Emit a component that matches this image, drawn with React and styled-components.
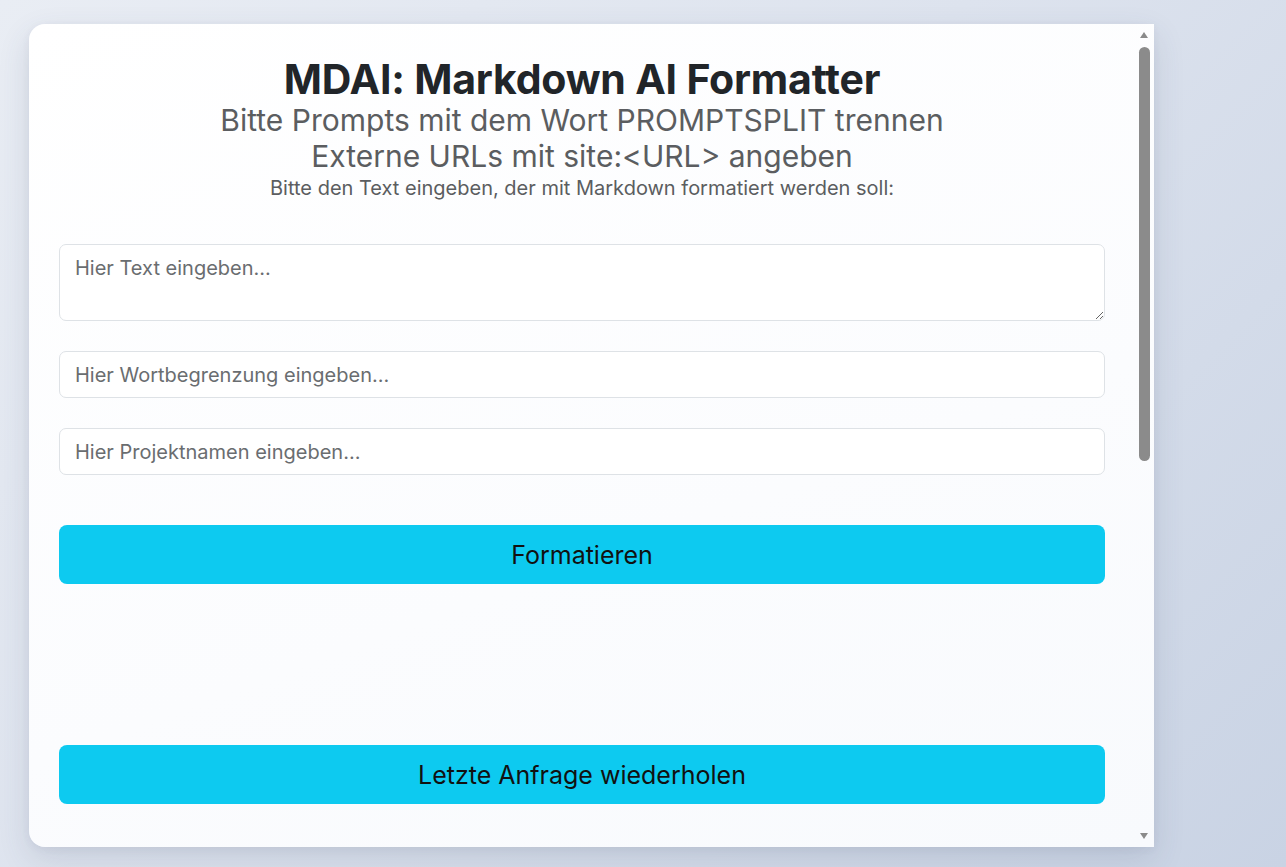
import React, { useEffect, useRef, useState } from "react";
import styled, { createGlobalStyle } from "styled-components";

const GlobalStyle = createGlobalStyle`
  html, body {
    margin: 0;
    padding: 0;
    height: 100%;
  }
  body {
    font-family: Inter, "Noto Sans", sans-serif;
    background: linear-gradient(135deg, #e9edf4 0%, #dde3ee 45%, #c9d3e4 100%);
    overflow: hidden;
  }
`;

const Page = styled.div`
  height: 867px;
  padding: 24px 0 0 29px;
  box-sizing: border-box;
`;

const Card = styled.main`
  width: 1125px;
  height: 823px;
  display: flex;
  overflow: hidden;
  background: linear-gradient(160deg, #ffffff 0%, #fbfcfe 60%, #f8fafd 100%);
  border-radius: 16px 0 0 16px;
  box-shadow: 0 12px 32px rgba(60, 72, 100, 0.14), 0 2px 8px rgba(60, 72, 100, 0.06);
`;

const Scroller = styled.div`
  flex: 1;
  min-width: 0;
  overflow-y: auto;
  box-sizing: border-box;
  padding: 32px 34px 0 30px;
  scrollbar-width: none;
  &::-webkit-scrollbar {
    display: none;
  }
`;

const ScrollBar = styled.div`
  width: 15px;
  flex: none;
  display: flex;
  flex-direction: column;
`;

const ArrowBox = styled.div`
  height: 22px;
  display: flex;
  align-items: center;
  justify-content: flex-start;
  padding-left: 1px;
`;

const Arrow = styled.span`
  width: 0;
  height: 0;
  border-left: 4.5px solid transparent;
  border-right: 4.5px solid transparent;
  ${(p) =>
    p.down
      ? "border-top: 6px solid #8a8a8a;"
      : "border-bottom: 6px solid #8a8a8a;"}
`;

const Track = styled.div`
  flex: 1;
  position: relative;
`;

const Thumb = styled.div`
  position: absolute;
  left: 0;
  width: 11px;
  border-radius: 6px;
  background: #8b8b8b;
`;

const Header = styled.header`
  display: flex;
  flex-direction: column;
  align-items: center;
  text-align: center;
  margin-bottom: 42px;
`;

const Title = styled.h1`
  margin: 0;
  font-size: 41px;
  font-weight: 700;
  line-height: 46px;
  color: #212529;
  letter-spacing: -0.2px;
`;

const Hint = styled.p`
  margin: 0;
  font-size: ${(p) => (p.small ? "20px" : "30px")};
  line-height: ${(p) => (p.small ? "28px" : "36px")};
  color: #5b5d60;
  font-weight: 400;
`;

const Form = styled.form`
  display: flex;
  flex-direction: column;
`;

const fieldBase = `
  width: 100%;
  box-sizing: border-box;
  border: 1px solid #dee2e6;
  border-radius: 7px;
  background: #fff;
  font-family: Inter, "Noto Sans", sans-serif;
  font-size: 20px;
  color: #212529;
  padding: 0 15px;
  outline: none;
  &::placeholder {
    color: #6a6d70;
  }
`;

const TextArea = styled.textarea`
  ${fieldBase}
  height: 77px;
  padding-top: 10px;
  line-height: 26px;
  margin-bottom: 30px;
`;

const Input = styled.input`
  ${fieldBase}
  height: 47px;
  margin-bottom: 30px;
`;

const Button = styled.button`
  width: 100%;
  height: 59px;
  border: none;
  border-radius: 8px;
  background: #0dcaf0;
  color: #111;
  font-family: Inter, "Noto Sans", sans-serif;
  font-size: 25px;
  font-weight: 400;
  cursor: pointer;
`;

const Output = styled.section`
  min-height: ${(p) => p.h}px;
`;

export default function App() {
  const scrollRef = useRef(null);
  const trackRef = useRef(null);
  const [thumb, setThumb] = useState({ top: 1, height: 415 });

  const update = () => {
    const el = scrollRef.current;
    const track = trackRef.current;
    if (!el || !track) return;
    const th = track.clientHeight;
    const height = Math.max(30, (el.clientHeight / el.scrollHeight) * th);
    const max = el.scrollHeight - el.clientHeight;
    const top = 1 + (max > 0 ? (el.scrollTop / max) * (th - height - 2) : 0);
    setThumb({ top, height });
  };

  useEffect(update, []);

  return (
    <>
      <GlobalStyle />
      <Page>
        <Card>
          <Scroller ref={scrollRef} onScroll={update}>
            <Header>
              <Title>MDAI: Markdown AI Formatter</Title>
              <Hint>Bitte Prompts mit dem Wort PROMPTSPLIT trennen</Hint>
              <Hint>Externe URLs mit site:&lt;URL&gt; angeben</Hint>
              <Hint small>Bitte den Text eingeben, der mit Markdown formatiert werden soll:</Hint>
            </Header>
            <Form onSubmit={(e) => e.preventDefault()}>
              <TextArea placeholder="Hier Text eingeben..." />
              <Input placeholder="Hier Wortbegrenzung eingeben..." />
              <Input placeholder="Hier Projektnamen eingeben..." />
              <Output h={20} />
              <Button type="button">Formatieren</Button>
              <Output h={161} />
              <Button type="button">Letzte Anfrage wiederholen</Button>
              <Output h={770} />
            </Form>
          </Scroller>
          <ScrollBar>
            <ArrowBox>
              <Arrow />
            </ArrowBox>
            <Track ref={trackRef}>
              <Thumb style={{ top: thumb.top, height: thumb.height }} />
            </Track>
            <ArrowBox>
              <Arrow down />
            </ArrowBox>
          </ScrollBar>
        </Card>
      </Page>
    </>
  );
}
